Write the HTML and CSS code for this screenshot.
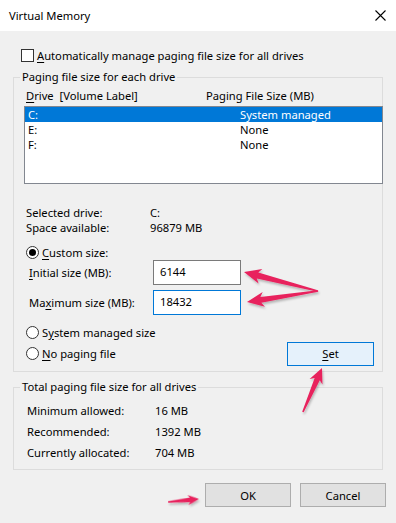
FILE: index.html
```html
<!DOCTYPE html>
<html lang="en">
<head>
  <meta charset="UTF-8" />
  <title>Virtual Memory</title>
  <link rel="stylesheet" href="styles.css">
</head>
<body>
  <div class="window">
    <div class="titlebar">
      <span class="title">Virtual Memory</span>
      <svg class="close" width="11" height="11" viewBox="0 0 11 11">
        <path d="M0.5 0.5 L10.5 10.5 M10.5 0.5 L0.5 10.5" stroke="#000" stroke-width="1.1" fill="none"/>
      </svg>
    </div>

    <div class="content">
      <label class="auto-row">
        <span class="checkbox"></span>
        <span><u>A</u>utomatically manage paging file size for all drives</span>
      </label>

      <fieldset class="group group-drives">
        <legend>Paging file size for each drive</legend>
        <div class="list-head">
          <span class="col-drive"><u>D</u>rive&nbsp; [Volume Label]</span>
          <span>Paging File Size (MB)</span>
        </div>
        <div class="listbox">
          <div class="list-row selected"><span class="col-drive">C:</span><span>System managed</span></div>
          <div class="list-row"><span class="col-drive">E:</span><span>None</span></div>
          <div class="list-row"><span class="col-drive">F:</span><span>None</span></div>
        </div>

        <div class="info">
          <div class="info-row"><span class="info-label">Selected drive:</span><span>C:</span></div>
          <div class="info-row"><span class="info-label">Space available:</span><span>96879 MB</span></div>
        </div>

        <div class="radio-row custom">
          <span class="radio checked"></span>
          <span><u>C</u>ustom size:</span>
        </div>
        <div class="size-row">
          <span class="size-label"><u>I</u>nitial size (MB):</span>
          <div class="textbox">6144</div>
        </div>
        <div class="size-row second">
          <span class="size-label">Ma<u>x</u>imum size (MB):</span>
          <div class="textbox focused">18432</div>
        </div>
        <div class="radio-row system">
          <span class="radio"></span>
          <span>S<u>y</u>stem managed size</span>
        </div>
        <div class="radio-row nopaging">
          <span class="radio"></span>
          <span><u>N</u>o paging file</span>
          <button class="btn btn-set"><u>S</u>et</button>
        </div>
      </fieldset>

      <fieldset class="group group-total">
        <legend>Total paging file size for all drives</legend>
        <div class="total-row"><span class="total-label">Minimum allowed:</span><span>16 MB</span></div>
        <div class="total-row"><span class="total-label">Recommended:</span><span>1392 MB</span></div>
        <div class="total-row"><span class="total-label">Currently allocated:</span><span>704 MB</span></div>
      </fieldset>

      <div class="actions">
        <button class="btn">OK</button>
        <button class="btn">Cancel</button>
      </div>
    </div>

    <!-- annotation arrows drawn over the dialog -->
    <svg class="arrows" width="396" height="523" viewBox="0 0 396 523">
      <defs>
        <filter id="shadow" x="-30%" y="-30%" width="160%" height="160%">
          <feDropShadow dx="1" dy="2" stdDeviation="1.2" flood-color="#000" flood-opacity="0.25"/>
        </filter>
      </defs>
      <g fill="#e8215d" filter="url(#shadow)">
        <g transform="translate(244 272) rotate(14.4)">
          <polygon points="0,0 17,-7.5 14,-3 76,-0.8 76,0.8 14,3 17,7.5"/>
        </g>
        <g transform="translate(247 302) rotate(-8.8)">
          <polygon points="0,0 17,-7.5 14,-3 72,-0.8 72,0.8 14,3 17,7.5"/>
        </g>
        <g transform="translate(322 368) rotate(113.4)">
          <polygon points="0,0 15,-7 12,-2.8 48,-0.8 48,0.8 12,2.8 15,7"/>
        </g>
        <g transform="translate(199 499) rotate(174.5)">
          <polygon points="0,0 11,-5 9,-2.2 31,-0.8 31,0.8 9,2.2 11,5"/>
        </g>
      </g>
    </svg>
  </div>
</body>
</html>
```

FILE: styles.css
```css
body {
  margin: 0;
  font-family: 'Noto Sans', sans-serif;
  font-size: 11.2px;
  color: #000;
}

.window {
  position: relative;
  width: 396px;
  height: 523px;
  background-color: #f0f0f0;
  overflow: hidden;
}

.titlebar {
  height: 31px;
  background: #ffffff;
  display: flex;
  align-items: center;
  justify-content: space-between;
  padding: 0 10px 0 9px;
  box-sizing: border-box;
}

.close {
  display: block;
}

.content {
  padding: 0 13px;
}

u {
  text-decoration: underline;
  text-underline-offset: 2px;
}

.auto-row {
  display: flex;
  align-items: center;
  gap: 3px;
  height: 16px;
  margin-top: 16px;
  padding-left: 8px;
}

.checkbox {
  width: 11px;
  height: 11px;
  border: 1px solid #333;
  background: #fff;
}

.group {
  margin: 0;
  border: 1px solid #dcdcdc;
  padding: 0;
  min-width: 0;
}

.group legend {
  padding: 0 2px;
  line-height: 16px;
}

.group-drives {
  margin-top: 6px;
  padding: 3px 0 5px 10px;
}

.group-drives legend {
  margin-left: -4px;
}

.list-head {
  display: flex;
  height: 16px;
  line-height: 16px;
  padding-left: 2px;
}

.col-drive {
  width: 180px;
  flex-shrink: 0;
}

.listbox {
  margin-top: 2px;
  margin-right: -1px;
  height: 76px;
  border: 1px solid #828790;
  background: #fff;
}

.list-row {
  display: flex;
  height: 15px;
  line-height: 15px;
  padding-left: 3px;
}

.list-row .col-drive {
  width: 212px;
}

.list-row.selected {
  background-color: #0078d7;
  color: #fff;
}

.info {
  margin-top: 21px;
  padding-left: 2px;
}

.info-row {
  display: flex;
  height: 15px;
  line-height: 15px;
}

.info-label {
  width: 124px;
}

.radio-row {
  display: flex;
  align-items: center;
  gap: 3px;
  padding-left: 2px;
}

.radio {
  width: 11px;
  height: 11px;
  border: 1px solid #333;
  border-radius: 50%;
  background: #fff;
  position: relative;
}

.radio.checked::after {
  content: "";
  position: absolute;
  left: 2px;
  top: 2px;
  width: 7px;
  height: 7px;
  border-radius: 50%;
  background: #000;
}

.custom {
  margin-top: 10px;
  height: 15px;
}

.size-row {
  display: flex;
  align-items: center;
  padding-left: 5px;
}

.size-row.second {
  margin-top: 5px;
}

.size-label {
  width: 124px;
}

.textbox {
  width: 80px;
  height: 23px;
  line-height: 21px;
  border: 1px solid #7a7a7a;
  background: #fff;
  padding-left: 6px;
}

.textbox.focused {
  border-color: #0078d7;
}

.system {
  margin-top: 9px;
  height: 16px;
}

.nopaging {
  margin-top: 1px;
  height: 25px;
}

.btn {
  font-family: inherit;
  font-size: 11.2px;
  color: #000;
  width: 86px;
  height: 24px;
  padding: 0;
  background-color: #e1e1e1;
  border: 1px solid #adadad;
  border-radius: 0;
}

.btn-set {
  margin-left: auto;
  margin-right: 8px;
  width: 87px;
  background-color: #e5f1fb;
  border-color: #0078d7;
}

.group-total {
  margin-top: 7px;
  padding: 5px 0 6px 12px;
}

.group-total legend {
  margin-left: -6px;
}

.total-row {
  display: flex;
  height: 21px;
  line-height: 21px;
  padding-left: 1px;
}

.total-label {
  width: 128px;
}

.actions {
  display: flex;
  justify-content: flex-end;
  gap: 9px;
  margin-top: 13px;
  margin-right: -3px;
}

.arrows {
  position: absolute;
  left: 0;
  top: 0;
  pointer-events: none;
}
```
